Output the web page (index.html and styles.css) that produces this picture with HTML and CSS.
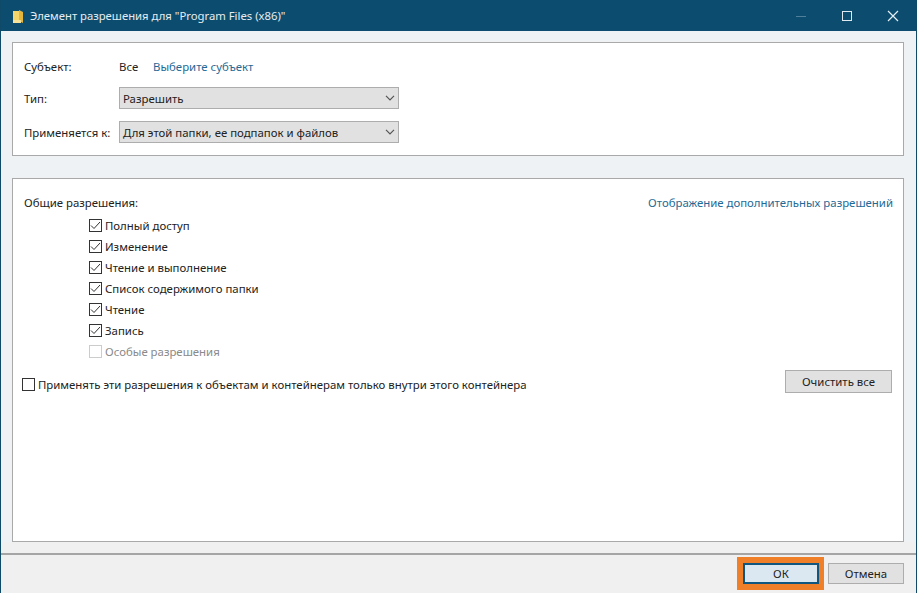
FILE: index.html
```html
<!DOCTYPE html>
<html lang="ru">
<head>
<meta charset="utf-8">
<title>Элемент разрешения</title>
<link rel="stylesheet" href="styles.css">
</head>
<body>
<div class="window">
  <header class="titlebar">
    <svg class="folder" width="14" height="16" viewBox="0 0 14 16"><path d="M2 3h8v12H2z" fill="#f3d56b"/><path d="M8 2l4 2v11l-4-2z" fill="#e5b63c"/><path d="M2 12h8v3H2z" fill="#f7e29a"/></svg>
    <span class="title">Элемент разрешения для "Program Files (x86)"</span>
    <div class="controls">
      <span class="ctl"><svg width="12" height="12" viewBox="0 0 12 12"><path d="M1 6.500h10" stroke="#4f7f99" fill="none"/></svg></span>
      <span class="ctl"><svg width="12" height="12" viewBox="0 0 12 12"><rect x="1.500" y="1.500" width="9" height="9" stroke="#dfeaf0" fill="none"/></svg></span>
      <span class="ctl"><svg width="12" height="12" viewBox="0 0 12 12"><path d="M1 1l10 10M11 1L1 11" stroke="#e6eff3" stroke-width="1.200" fill="none"/></svg></span>
    </div>
  </header>
  <main class="body">
    <section class="panel top">
      <div class="row subject"><span class="label">Субъект:</span><span class="all">Все</span><a class="link">Выберите субъект</a></div>
      <div class="row type"><span class="label">Тип:</span><div class="select"><span>Разрешить</span><svg width="10" height="6" viewBox="0 0 10 6"><path d="M1 0.800L5 4.800l4-4" stroke="#555" stroke-width="1.200" fill="none"/></svg></div></div>
      <div class="row applies"><span class="label">Применяется к:</span><div class="select"><span>Для этой папки, ее подпапок и файлов</span><svg width="10" height="6" viewBox="0 0 10 6"><path d="M1 0.800L5 4.800l4-4" stroke="#555" stroke-width="1.200" fill="none"/></svg></div></div>
    </section>
    <section class="panel perms">
      <div class="perm-head"><span>Общие разрешения:</span><a class="link">Отображение дополнительных разрешений</a></div>
      <ul class="checks">
        <li><span class="box"><svg width="11" height="9" viewBox="0 0 11 9"><path d="M1 4.500l3 3 6-6.500" stroke="#333" fill="none"/></svg></span>Полный доступ</li>
        <li><span class="box"><svg width="11" height="9" viewBox="0 0 11 9"><path d="M1 4.500l3 3 6-6.500" stroke="#333" fill="none"/></svg></span>Изменение</li>
        <li><span class="box"><svg width="11" height="9" viewBox="0 0 11 9"><path d="M1 4.500l3 3 6-6.500" stroke="#333" fill="none"/></svg></span>Чтение и выполнение</li>
        <li><span class="box"><svg width="11" height="9" viewBox="0 0 11 9"><path d="M1 4.500l3 3 6-6.500" stroke="#333" fill="none"/></svg></span>Список содержимого папки</li>
        <li><span class="box"><svg width="11" height="9" viewBox="0 0 11 9"><path d="M1 4.500l3 3 6-6.500" stroke="#333" fill="none"/></svg></span>Чтение</li>
        <li><span class="box"><svg width="11" height="9" viewBox="0 0 11 9"><path d="M1 4.500l3 3 6-6.500" stroke="#333" fill="none"/></svg></span>Запись</li>
        <li class="disabled"><span class="box"></span>Особые разрешения</li>
      </ul>
      <div class="apply-row">
        <label class="apply"><span class="box"></span>Применять эти разрешения к объектам и контейнерам только внутри этого контейнера</label>
        <button class="btn clear">Очистить все</button>
      </div>
    </section>
  </main>
  <footer class="footer">
    <span class="highlight"><button class="btn ok">ОК</button></span>
    <button class="btn cancel">Отмена</button>
  </footer>
</div>
</body>
</html>
```
FILE: styles.css
```css
* { box-sizing: border-box; }
html, body { margin: 0; padding: 0; }
body { width: 917px; height: 593px; overflow: hidden; font: 11.4px "Noto Sans", "Open Sans", sans-serif; color: #222; }
.window { width: 917px; height: 593px; display: flex; flex-direction: column; background: #f0f0f0; border: 1px solid #0f4a68; border-top: 0; }
.titlebar { height: 31px; flex: none; background: #0c4c6e; color: #e4edf2; display: flex; align-items: center; padding-left: 10px; }
.folder { margin-right: 5px; }
.title { font-size: 11.3px; }
.controls { margin-left: auto; display: flex; }
.ctl { width: 46px; height: 30px; display: flex; align-items: center; justify-content: center; }
.body { flex: 1; display: flex; flex-direction: column; padding: 11px 12px 0 11px; gap: 22px; background: #eef2f5; }
.panel { background: #fff; border: 1px solid #a9a9a9; }
.top { height: 114px; padding: 12px 11px 0; display: flex; flex-direction: column; }
.row { display: flex; align-items: center; }
.subject { height: 22px; }
.type { height: 22px; margin-top: 10px; }
.applies { height: 22px; margin-top: 12px; }
.label { width: 95px; flex: none; }
.all { width: 34px; }
.link { color: #1f6a96; }
.select { width: 280px; height: 22px; background: #e1e1e1; border: 1px solid #adadad; display: flex; align-items: center; justify-content: space-between; padding: 0 3px 0 3px; }
.perms { height: 364px; padding: 13px 11px 0; display: flex; flex-direction: column; }
.perm-head { display: flex; justify-content: space-between; height: 20px; align-items: center; margin-right: -1px; }
.checks { list-style: none; margin: 3px 0 0; padding: 0 0 0 65px; }
.checks li { height: 21px; display: flex; align-items: center; }
.box { width: 13px; height: 13px; border: 1px solid #333; background: #fff; margin-right: 3px; flex: none; display: flex; align-items: center; justify-content: center; }
.disabled { color: #8a8a8a; }
.disabled .box { border-color: #ccc; }
.apply-row { display: flex; align-items: flex-start; justify-content: space-between; margin-top: 8px; margin-left: -2px; }
.apply { display: flex; align-items: center; margin-top: 7px; }
.btn { font: inherit; color: #222; background: #e1e1e1; border: 1px solid #adadad; padding: 0; height: 23px; }
.clear { width: 107px; }
.footer { height: 40px; flex: none; margin-top: 11px; border-top: 2px solid #a5a5a5; background: #f0f0f0; display: flex; justify-content: flex-end; align-items: flex-start; padding: 2px 12px 0 0; gap: 4px; }
.highlight { background: #f07f2a; padding: 6px 5px 6px 6px; display: flex; }
.ok { width: 76px; height: 21px; background: #dbe8f2; border: 2px solid #10567e; }
.cancel { width: 76px; height: 21px; margin-top: 6px; }
```
